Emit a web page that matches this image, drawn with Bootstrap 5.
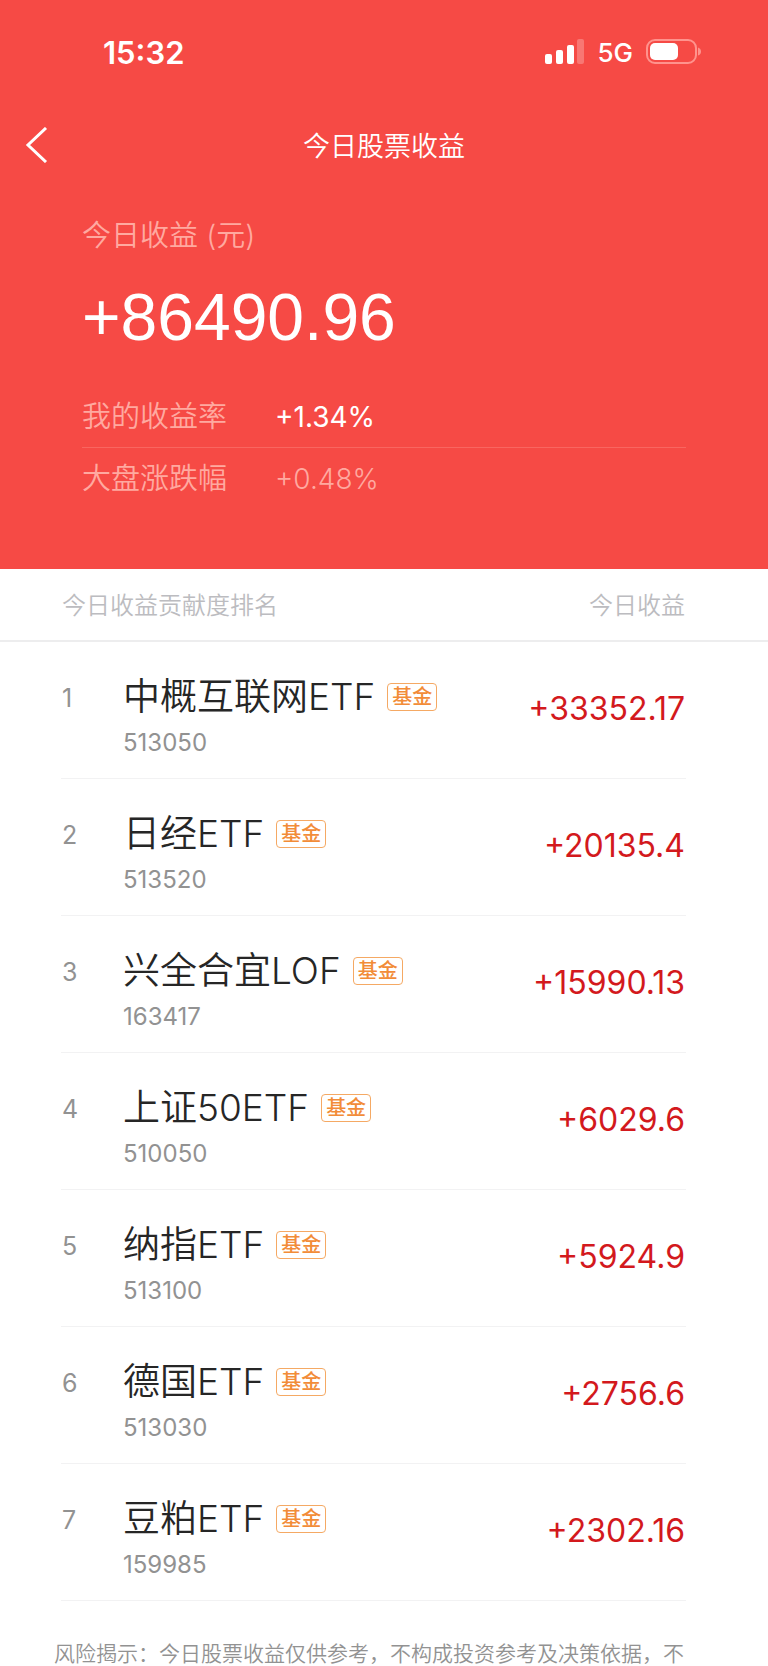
<!DOCTYPE html>
<html lang="zh-CN">
<head>
<meta charset="utf-8">
<meta name="viewport" content="width=device-width, initial-scale=1">
<title>今日股票收益</title>
<link href="https://cdn.jsdelivr.net/npm/bootstrap@5.3.0/dist/css/bootstrap.min.css" rel="stylesheet">
<style>
body{font-family:Inter,"Noto Sans CJK SC",sans-serif;font-weight:350;color:#262626;background:#fff}
.hero{background:#f64a45;color:#fff;padding-bottom:68px}
.status-bar{padding:36px 66px 0 103px;height:105px}
.clock{font-size:31px;line-height:34px;font-weight:600}
.network{font-size:26px;line-height:34px;font-weight:500}
.title-bar{display:grid;grid-template-columns:80px 1fr 80px;height:80px}
.title-bar h1{font-size:27px;line-height:40px;font-weight:350;padding-top:4px}
.back{background:none;border:0;padding:0 0 0 25px;line-height:0}
.summary{padding:31px 82px 0}
.dim{color:#ffa9a0}
.caption{font-size:29px;line-height:40px}
.total{font-family:"Liberation Sans",sans-serif;font-size:66px;line-height:80px;font-weight:400;margin:21px 0 38px}
.rate{font-size:29px;line-height:44px;padding-bottom:8px}
.rate + .rate{border-top:1px solid #f96660;padding:9px 0 0}
.rate dt{width:193px;font-weight:350}
.rate dd{font-size:28px;margin:0;font-weight:400}
.rate dd.dim{font-weight:350}
.ranking thead tr{padding:2px 82px 0 61px;height:73px;border-bottom:2px solid #ededee;font-size:24px;color:#bcbcc0}
.ranking th{font-weight:350}
.ranking tbody{margin:0 82px 0 61px}
.ranking tbody tr{height:137px;border-bottom:1px solid #f2f2f3}
.rank{width:61px;font-size:25px;line-height:36px;font-weight:400;color:#929292;padding-top:38px}
.fund{padding-top:31px}
.fund-name{font-size:37px;line-height:48px}
.fund-tag{font-size:20px;line-height:26px;font-weight:500;color:#f28c38;border:1px solid #f5a964;border-radius:4px;padding:0 4px;margin-left:12px}
.code{font-size:24px;line-height:30px;font-weight:400;margin-top:7px;color:#929292}
.amount{font-size:32px;line-height:44px;font-weight:400;padding-top:45px;color:#d3191d}
.notice{font-size:21px;line-height:34px;padding:36px 54px 0;color:#929292}
</style>
</head>
<body>
<header class="hero">
  <div class="status-bar d-flex justify-content-between align-items-start">
    <span class="clock">15:32</span>
    <div class="d-flex align-items-center">
      <svg width="40" height="34" viewBox="0 0 40 34" fill="#fff" aria-hidden="true"><rect x="0" y="18" width="7" height="10" rx="2"/><rect x="11" y="14" width="7" height="14" rx="2"/><rect x="22" y="9" width="7" height="19" rx="2"/><rect x="32" y="3" width="7" height="25" rx="2" opacity=".25"/></svg>
      <span class="network ms-2 me-2 px-1">5G</span>
      <svg width="57" height="34" viewBox="0 0 57 34" aria-hidden="true"><rect x="2" y="4" width="49" height="23" rx="8" fill="none" stroke="#ff938d" stroke-width="2"/><rect x="5" y="7" width="28" height="17" rx="5" fill="#fff"/><path d="M53 11.500q3 1 3 4t-3 4z" fill="#ff938d"/></svg>
    </div>
  </div>
  <nav class="title-bar align-items-center">
    <button class="back text-start" type="button" aria-label="返回"><svg width="24" height="36" viewBox="0 0 24 36" fill="none" stroke="#fff" stroke-width="3"><path d="M21 1 3 18l18 17"/></svg></button>
    <h1 class="m-0 text-center">今日股票收益</h1>
  </nav>
  <section class="summary">
    <div class="caption dim">今日收益 (元)</div>
    <div class="total">+86490.96</div>
    <dl class="m-0">
      <div class="rate d-flex"><dt class="dim">我的收益率</dt><dd>+1.34%</dd></div>
      <div class="rate d-flex"><dt class="dim">大盘涨跌幅</dt><dd class="dim">+0.48%</dd></div>
    </dl>
  </section>
</header>
<main>
  <table class="ranking d-block w-100">
    <thead class="d-block"><tr class="d-flex justify-content-between align-items-center"><th scope="col">今日收益贡献度排名</th><th scope="col">今日收益</th></tr></thead>
    <tbody class="d-block">
      <tr class="d-flex"><td class="rank">1</td><td class="fund flex-grow-1"><div class="d-flex align-items-center"><span class="fund-name">中概互联网ETF</span><span class="fund-tag">基金</span></div><div class="code">513050</div></td><td class="amount">+33352.17</td></tr>
      <tr class="d-flex"><td class="rank">2</td><td class="fund flex-grow-1"><div class="d-flex align-items-center"><span class="fund-name">日经ETF</span><span class="fund-tag">基金</span></div><div class="code">513520</div></td><td class="amount">+20135.4</td></tr>
      <tr class="d-flex"><td class="rank">3</td><td class="fund flex-grow-1"><div class="d-flex align-items-center"><span class="fund-name">兴全合宜LOF</span><span class="fund-tag">基金</span></div><div class="code">163417</div></td><td class="amount">+15990.13</td></tr>
      <tr class="d-flex"><td class="rank">4</td><td class="fund flex-grow-1"><div class="d-flex align-items-center"><span class="fund-name">上证50ETF</span><span class="fund-tag">基金</span></div><div class="code">510050</div></td><td class="amount">+6029.6</td></tr>
      <tr class="d-flex"><td class="rank">5</td><td class="fund flex-grow-1"><div class="d-flex align-items-center"><span class="fund-name">纳指ETF</span><span class="fund-tag">基金</span></div><div class="code">513100</div></td><td class="amount">+5924.9</td></tr>
      <tr class="d-flex"><td class="rank">6</td><td class="fund flex-grow-1"><div class="d-flex align-items-center"><span class="fund-name">德国ETF</span><span class="fund-tag">基金</span></div><div class="code">513030</div></td><td class="amount">+2756.6</td></tr>
      <tr class="d-flex"><td class="rank">7</td><td class="fund flex-grow-1"><div class="d-flex align-items-center"><span class="fund-name">豆粕ETF</span><span class="fund-tag">基金</span></div><div class="code">159985</div></td><td class="amount">+2302.16</td></tr>
    </tbody>
  </table>
  <p class="notice m-0">风险揭示：今日股票收益仅供参考，不构成投资参考及决策依据，不</p>
</main>
<script src="https://cdn.jsdelivr.net/npm/bootstrap@5.3.0/dist/js/bootstrap.bundle.min.js"></script>
</body>
</html>
